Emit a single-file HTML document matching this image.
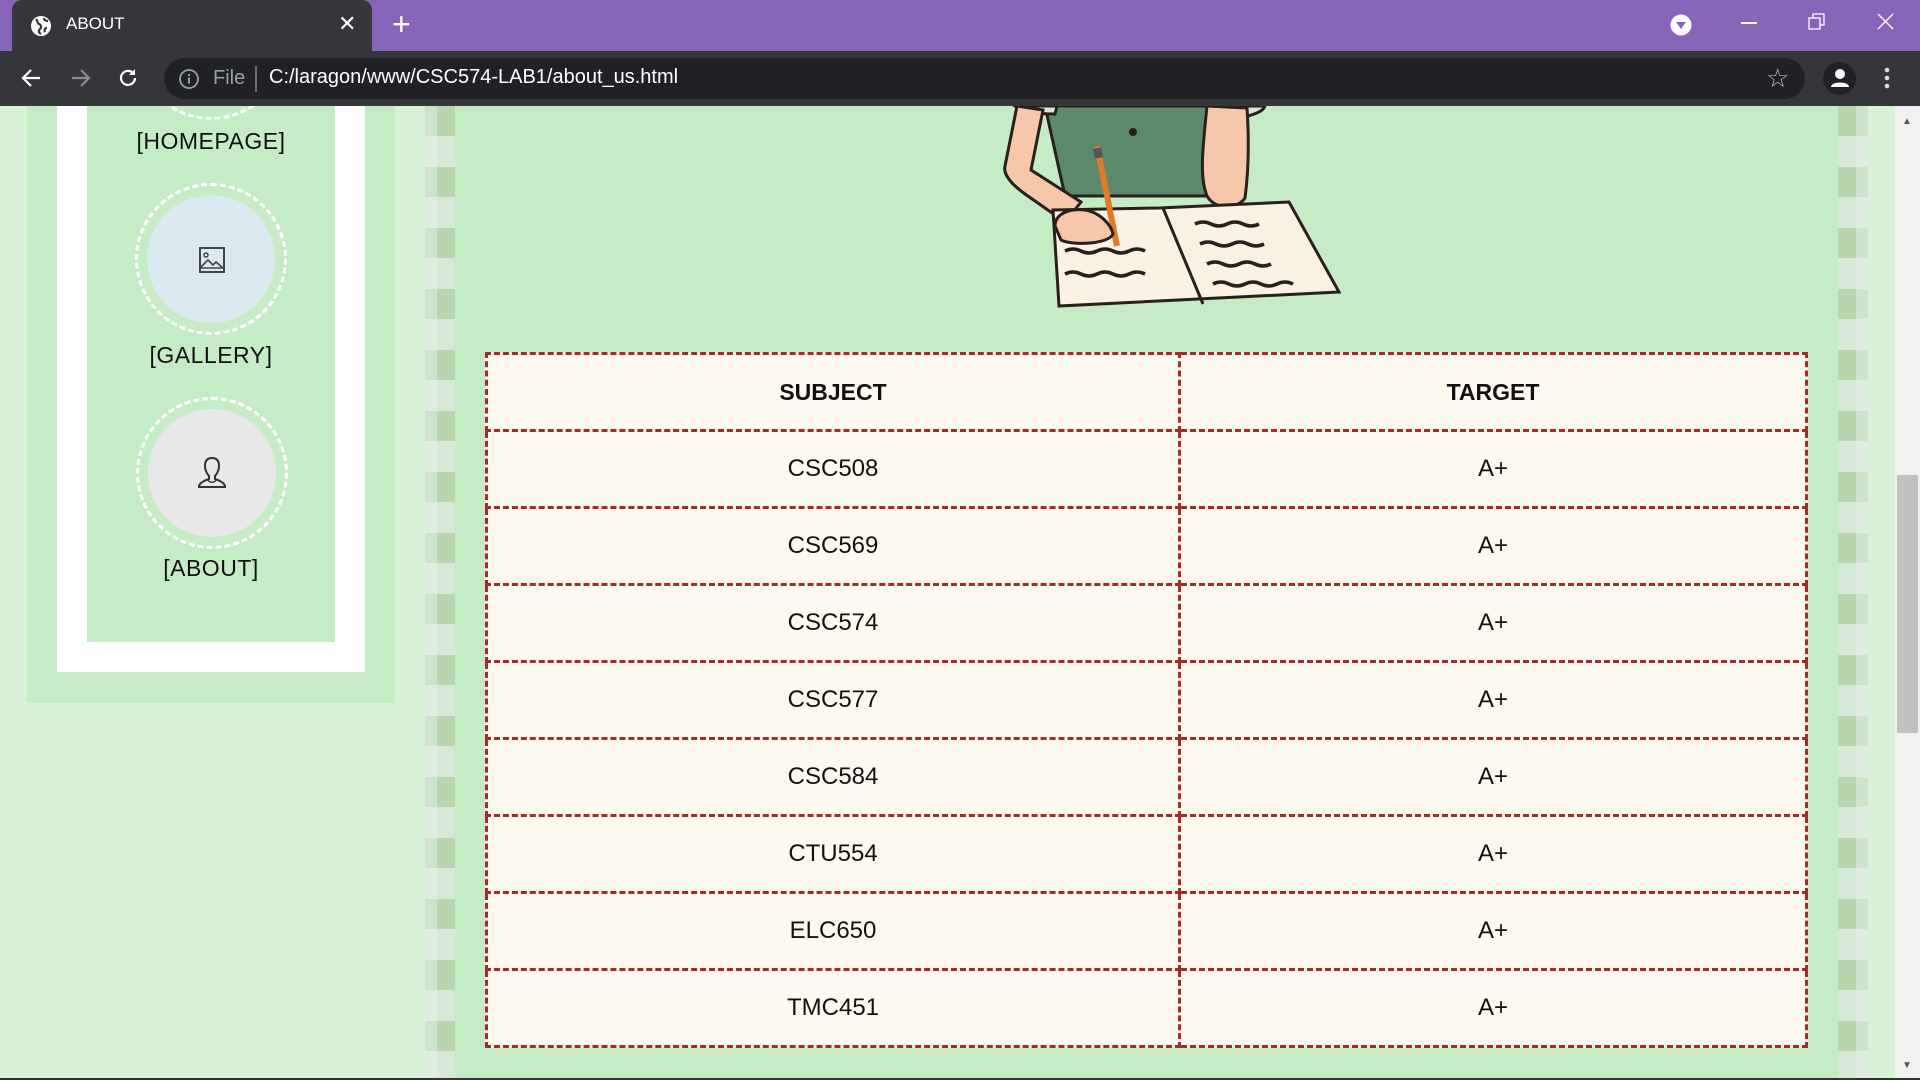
<!DOCTYPE html>
<html><head><meta charset="utf-8"><style>
*{margin:0;padding:0;box-sizing:border-box}
body{width:1920px;height:1080px;overflow:hidden;position:relative;background:#c6ecc6;font-family:"Liberation Sans",sans-serif}
.abs{position:absolute}
.strip{position:absolute;top:106px;height:972px;width:30px;background:repeating-linear-gradient(180deg,#b7d6ad 0 30px,#d6e8d6 30px 61px)}
.lbl{position:absolute;left:87px;width:248px;text-align:center;font-size:23px;color:#111;letter-spacing:0.5px}
.circ{position:absolute;width:128px;height:128px;border-radius:50%}
.ring{position:absolute;width:152px;height:152px;border-radius:50%;border:3px dashed #fff}
table{position:absolute;left:485px;top:352px;width:1323px;border-collapse:collapse;background:#fef9ef}
td{border:3px dashed #a52a2a;height:77px;text-align:center;font-size:24px;color:#111}
td:first-child{width:693px}
th{border:3px dashed #a52a2a;height:77px;font-size:23px;font-weight:bold;color:#111}
</style></head><body>
<!-- chrome -->
<div class="abs" style="left:0;top:0;width:1920px;height:51px;background:#8764b8"></div>
<div class="abs" style="left:12px;top:0;width:360px;height:51px;background:#35363a;border-radius:10px 10px 0 0"></div>
<svg class="abs" style="left:30px;top:15px" width="22" height="22" viewBox="0 0 22 22"><circle cx="11" cy="11" r="10" fill="#fff"/><path d="M6 4c2 2 1 4 3 5s3 3 1 5-1 4 1 5M14 3c0 2 2 3 4 3M17 13c-2 0-3 2-2 4" stroke="#35363a" stroke-width="2.2" fill="none"/></svg>
<div class="abs" style="left:66px;top:14px;font-size:17px;color:#fff">ABOUT</div>
<div class="abs" style="left:338px;top:11px;font-size:22px;color:#fff">✕</div>
<div class="abs" style="left:392px;top:6px;font-size:32px;color:#fff;font-weight:300">+</div>
<svg class="abs" style="left:1670px;top:14px" width="22" height="22"><circle cx="11" cy="11" r="10.5" fill="#fff"/><path d="M6 8h10l-5 7z" fill="#8764b8"/></svg>
<div class="abs" style="left:1741px;top:22px;width:16px;height:1.5px;background:#fff"></div>
<svg class="abs" style="left:1808px;top:13px" width="18" height="18"><rect x="1" y="5" width="11" height="11" fill="none" stroke="#fff" stroke-width="1.3"/><path d="M5 5V1h11v11h-4" fill="none" stroke="#fff" stroke-width="1.3"/></svg>
<svg class="abs" style="left:1877px;top:13px" width="18" height="18"><path d="M1 1l15 15M16 1L1 16" stroke="#fff" stroke-width="1.4"/></svg>
<div class="abs" style="left:0;top:51px;width:1920px;height:55px;background:#35363a"></div>
<svg class="abs" style="left:20px;top:66px" width="110" height="24"><path d="M3 12h17M11 4l-8 8 8 8" stroke="#fff" stroke-width="2.2" fill="none"/><path d="M52 12h17M61 4l8 8-8 8" stroke="#8a8b8f" stroke-width="2.2" fill="none"/></svg>
<svg class="abs" style="left:116px;top:66px" width="24" height="24"><path d="M19 12a7 7 0 1 1-2-5" stroke="#fff" stroke-width="2.2" fill="none"/><path d="M19 3v6h-6z" fill="#fff"/></svg>
<div class="abs" style="left:164px;top:58px;width:1641px;height:41px;border-radius:21px;background:#202124"></div>
<svg class="abs" style="left:178px;top:68px" width="22" height="22"><circle cx="11" cy="11" r="9" stroke="#9aa0a6" stroke-width="1.8" fill="none"/><rect x="10" y="9.5" width="2" height="6" fill="#9aa0a6"/><rect x="10" y="6" width="2" height="2" fill="#9aa0a6"/></svg>
<div class="abs" style="left:213px;top:67px;font-size:20px;color:#9aa0a6">File</div>
<div class="abs" style="left:255px;top:66px;width:1.5px;height:26px;background:#6a6b6f"></div>
<div class="abs" style="left:269px;top:66px;font-size:20px;color:#fff">C:/laragon/www/CSC574-LAB1/about_us.html</div>
<div class="abs" style="left:1766px;top:63px;font-size:26px;color:#bbb">☆</div>
<div class="abs" style="left:1823px;top:62px;width:33px;height:33px;border-radius:50%;background:#202124"></div>
<svg class="abs" style="left:1828px;top:66px" width="24" height="24"><circle cx="12" cy="8" r="5" fill="#fff"/><path d="M3 21c0-6 18-6 18 0z" fill="#fff"/></svg>
<svg class="abs" style="left:1880px;top:66px" width="14" height="26"><circle cx="7" cy="4" r="2.3" fill="#ddd"/><circle cx="7" cy="12" r="2.3" fill="#ddd"/><circle cx="7" cy="20" r="2.3" fill="#ddd"/></svg>

<!-- page -->
<div class="abs" style="left:0;top:106px;width:425px;height:972px;background:#d8f2d8"></div>
<div class="abs" style="left:27px;top:106px;width:368px;height:597px;background:#c6ecc6"></div>
<div class="abs" style="left:57px;top:106px;width:308px;height:566px;background:#fff"></div>
<div class="abs" style="left:87px;top:106px;width:248px;height:536px;background:#c6ecc6;overflow:hidden">
  <div class="ring" style="left:48px;top:-138px"></div>
</div>
<div class="lbl" style="top:128px">[HOMEPAGE]</div>
<div class="ring" style="left:135px;top:183px"></div>
<div class="circ" style="left:147px;top:195px;background:#daeaf0"></div>
<svg class="abs" style="left:198px;top:246px" width="28" height="28" viewBox="0 0 28 28"><rect x="2" y="2" width="24" height="24" fill="none" stroke="#444" stroke-width="2"/><circle cx="8" cy="9" r="2" fill="none" stroke="#444" stroke-width="1.5"/><path d="M3 21l7-7 5 5 3-3 7 6M2 22h24" fill="none" stroke="#444" stroke-width="1.6"/></svg>
<div class="lbl" style="top:342px">[GALLERY]</div>
<div class="ring" style="left:136px;top:397px"></div>
<div class="circ" style="left:148px;top:409px;background:#e8e8e8"></div>
<svg class="abs" style="left:196px;top:456px" width="32" height="34" viewBox="0 0 32 34"><path d="M16 2c-5 0-7 3-7 8 0 4 2 8 4 10v3c-3 1-9 3-10 7v1h26v-1c-1-4-7-6-10-7v-3c2-2 4-6 4-10 0-5-2-8-7-8z" fill="none" stroke="#333" stroke-width="2"/><path d="M12 24c2 3 6 3 8 0" fill="none" stroke="#333" stroke-width="1.5"/></svg>
<div class="lbl" style="top:555px">[ABOUT]</div>

<div class="strip" style="left:425px"></div>
<div class="abs" style="left:425px;top:106px;width:12px;height:972px;background:rgba(235,245,240,.45)"></div>
<div class="strip" style="left:1838px"></div>
<div class="abs" style="left:1856px;top:106px;width:12px;height:972px;background:rgba(235,245,240,.45)"></div>
<div class="abs" style="left:1868px;top:106px;width:27px;height:972px;background:#d8f2d8"></div>
<div class="abs" style="left:1895px;top:106px;width:25px;height:972px;background:#f1f1f1"></div>
<div class="abs" style="left:1897px;top:475px;width:21px;height:258px;background:#c1c1c1"></div>
<div class="abs" style="left:1902px;top:116px;font-size:10px;color:#555">▲</div>
<div class="abs" style="left:1902px;top:1060px;font-size:10px;color:#555">▼</div>
<div class="abs" style="left:0;top:1078px;width:1920px;height:2px;background:#333"></div>

<!-- illustration -->
<svg class="abs" style="left:985px;top:106px" width="360" height="206" viewBox="0 0 360 206">
<path d="M60 0h196l-8 90H80z" fill="#5d8a6a" stroke="#2a1f1a" stroke-width="3"/>
<path d="M30 0c8 6 20 8 40 8l2-8z" fill="#d5e8d5" stroke="#2a1f1a" stroke-width="3"/>
<path d="M240 0c-2 6 0 12 10 14 20-6 28-8 30-14z" fill="#d5e8d5" stroke="#2a1f1a" stroke-width="3"/>
<circle cx="148" cy="26" r="4" fill="#2a1f1a"/>
<path d="M32 0L20 60c-2 8 6 18 20 28l40 28 16-20-50-32 12-60z" fill="#f7c7ac" stroke="#2a1f1a" stroke-width="3"/>
<path d="M222 0c-4 40-8 70 0 90 8 14 30 14 38 2 4-30 4-60 2-90z" fill="#f7c7ac" stroke="#2a1f1a" stroke-width="3"/>
<path d="M68 104l106 -2 130 -6 50 90-280 14z" fill="#f9f2e2" stroke="#2a1f1a" stroke-width="3"/>
<path d="M178 102l40 96" stroke="#2a1f1a" stroke-width="3"/>
<path d="M80 145q8-4 16 0t16 0 16 0 16 0 16 0M80 168q8-4 16 0t16 0 16 0 16 0 16 0M210 118q8-4 16 0t16 0 16 0 16 0M215 138q8-4 16 0t16 0 16 0 16 0M222 158q8-4 16 0t16 0 16 0 16 0M228 178q8-4 16 0t16 0 16 0 16 0 16 0" stroke="#2a1f1a" stroke-width="3.5" fill="none"/>
<path d="M112 40l20 100" stroke="#e07b2a" stroke-width="6"/>
<rect x="109" y="42" width="8" height="10" fill="#555" transform="rotate(-11 113 47)"/>
<path d="M70 120c0-12 14-18 30-16 14 2 26 14 28 24-4 10-40 12-52 6z" fill="#f7c7ac" stroke="#2a1f1a" stroke-width="3"/>
</svg>

<table>
<tr><th>SUBJECT</th><th>TARGET</th></tr>
<tr><td>CSC508</td><td>A+</td></tr>
<tr><td>CSC569</td><td>A+</td></tr>
<tr><td>CSC574</td><td>A+</td></tr>
<tr><td>CSC577</td><td>A+</td></tr>
<tr><td>CSC584</td><td>A+</td></tr>
<tr><td>CTU554</td><td>A+</td></tr>
<tr><td>ELC650</td><td>A+</td></tr>
<tr><td>TMC451</td><td>A+</td></tr>
</table>
</body></html>
